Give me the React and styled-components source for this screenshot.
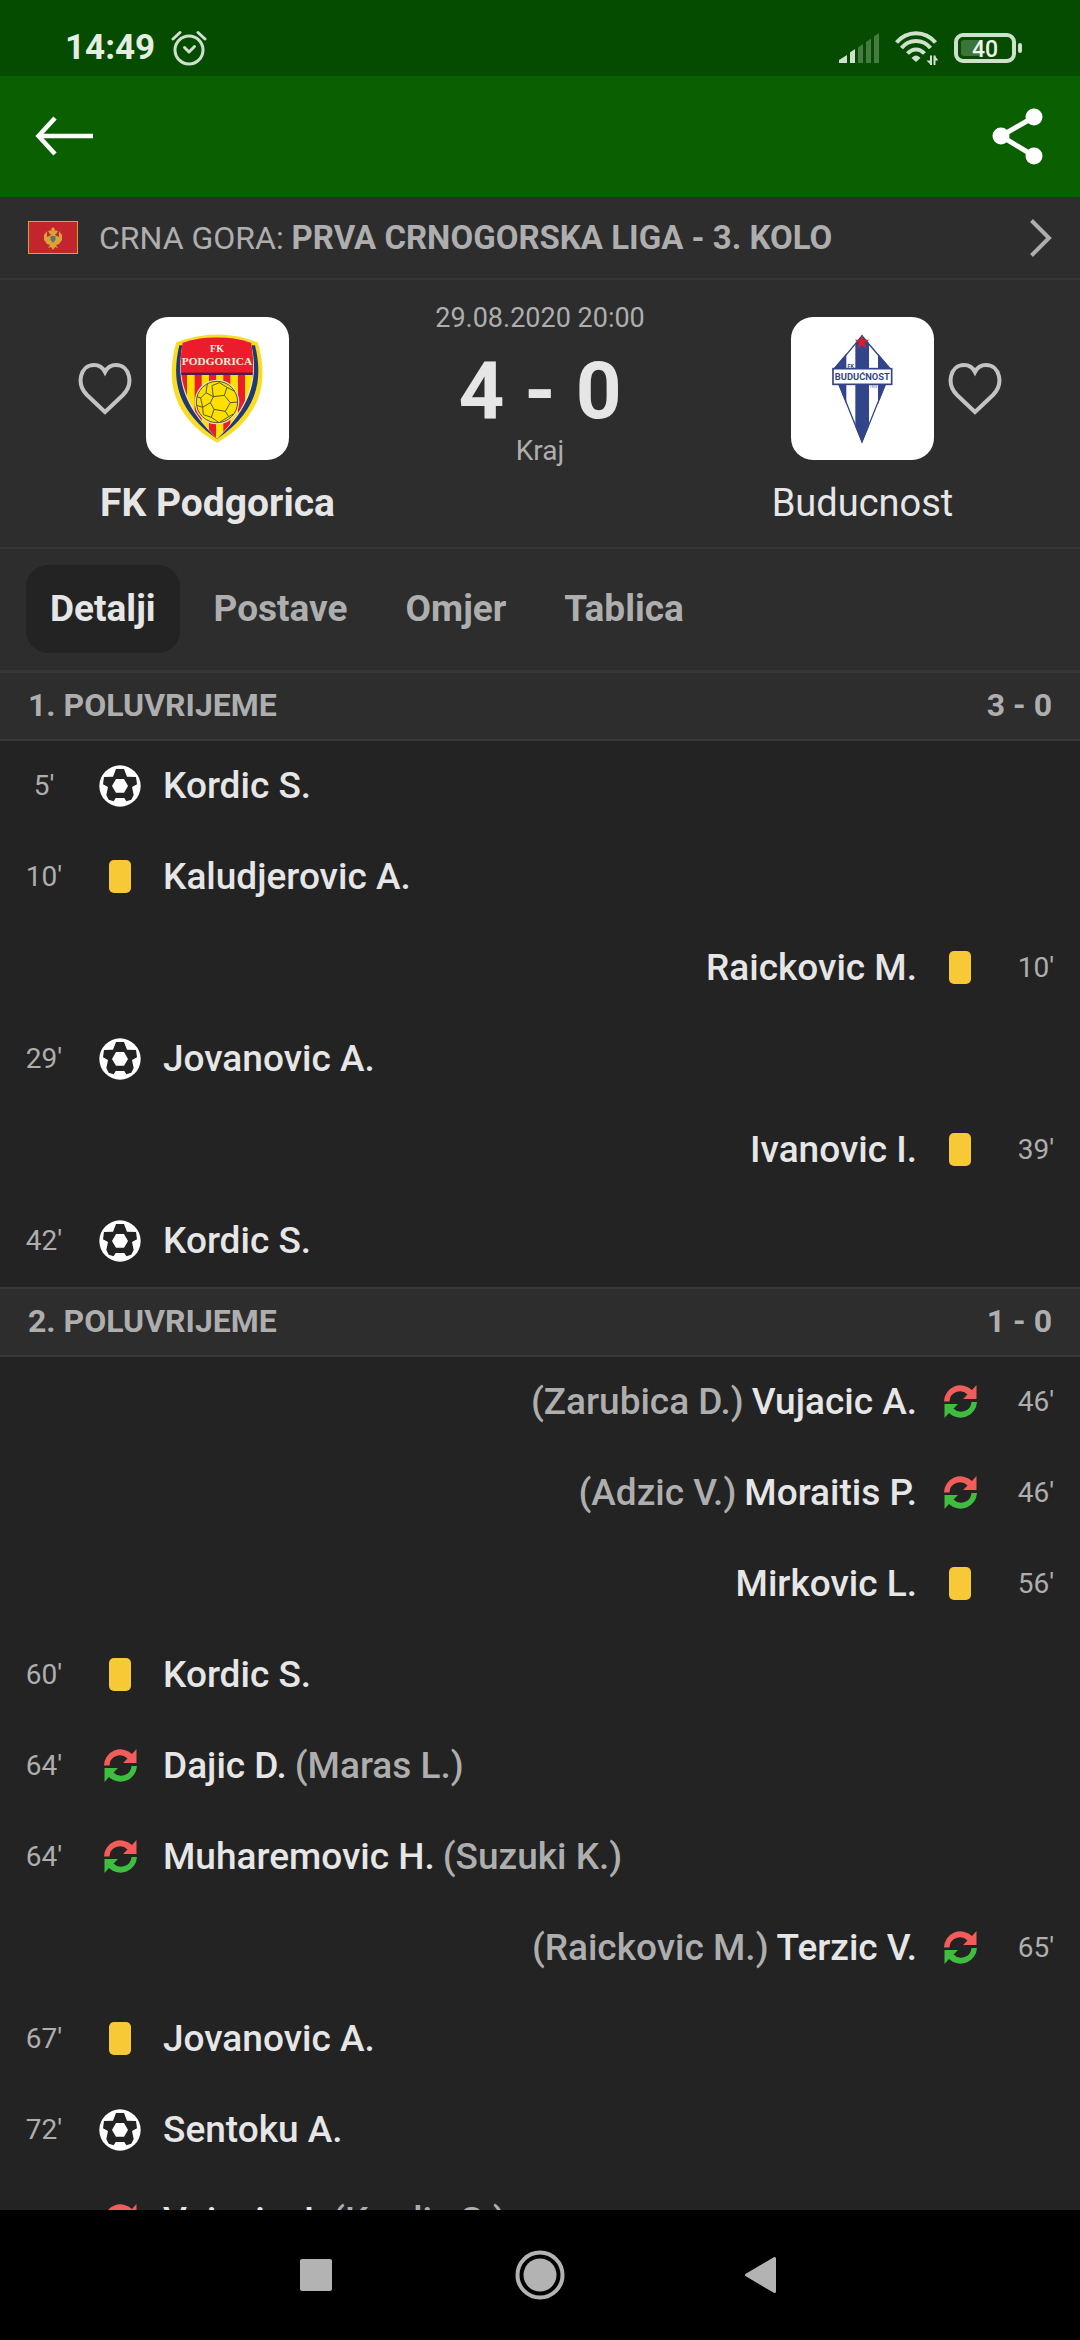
import React from "react";
import styled, { createGlobalStyle, css } from "styled-components";

const colors = {
  status: "#054b00",
  header: "#0a6000",
  panel: "#2d2d2d",
  list: "#232323",
  line: "#373737",
  text: "#e6e6e6",
  muted: "#aeaeae",
  card: "#f8c936",
  off: "#f25c5a",
  on: "#3fbd3f",
};

const GlobalStyle = createGlobalStyle`
  * { box-sizing: border-box; }
  body { margin: 0; background: #000; }
  button { padding: 0; border: 0; background: none; color: inherit; font: inherit; cursor: pointer; }
  svg { display: block; }
`;

const Screen = styled.div`
  display: flex;
  flex-direction: column;
  height: 100vh;
  background: ${colors.list};
  color: ${colors.text};
  font-family: Roboto, "Liberation Sans", sans-serif;
`;

const StatusBar = styled.div`
  flex: none;
  display: flex;
  align-items: center;
  justify-content: space-between;
  height: 76px;
  padding: 20px 58px 0 65px;
  background: ${colors.status};
  color: #e4eee3;
`;

const StatusGroup = styled.div`
  display: flex;
  align-items: center;
  gap: 16px;
`;

const Clock = styled.time`
  font-size: 35px;
  line-height: 40px;
  font-weight: 700;
`;

const Header = styled.header`
  flex: none;
  display: flex;
  align-items: center;
  justify-content: space-between;
  height: 121px;
  padding: 0 30px 0 32px;
  background: ${colors.header};
  color: #fff;
`;

const Content = styled.main`
  flex: 1;
  min-height: 0;
  overflow: hidden;
`;

const LeagueLink = styled.a`
  display: flex;
  align-items: center;
  height: 83px;
  padding: 0 28px;
  border-bottom: 2px solid ${colors.line};
  background: ${colors.panel};
  color: ${colors.muted};
  font-size: 32px;
  line-height: 40px;
  text-decoration: none;
`;

const LeagueName = styled.span`
  flex: 1;
  padding-left: 21px;
`;

const Round = styled.b`
  font-size: 33px;
`;

const Match = styled.section`
  display: grid;
  grid-template-columns: auto 1fr auto;
  padding: 0 78px 20px;
  border-bottom: 2px solid ${colors.line};
  background: ${colors.panel};
`;

const Team = styled.div`
  display: grid;
  grid-template-columns: 68px 143px 68px;
  align-items: center;
  row-gap: 19px;
  padding-top: 37px;
`;

const FavButton = styled.button`
  grid-row: 1;
  grid-column: ${(p) => (p.$away ? 3 : 1)};
  justify-self: ${(p) => (p.$away ? "end" : "start")};
`;

const Crest = styled.div`
  grid-row: 1;
  grid-column: 2;
  height: 143px;
  border-radius: 22px;
  background: #fff;
  overflow: hidden;
`;

const TeamName = styled.h2`
  grid-column: 1 / -1;
  margin: 0;
  font-size: ${(p) => (p.$winner ? 39 : 38)}px;
  line-height: 48px;
  font-weight: ${(p) => (p.$winner ? 700 : 400)};
  text-align: center;
`;

const Result = styled.div`
  display: flex;
  flex-direction: column;
  align-items: center;
  padding-top: 18px;
`;

const Info = styled.div`
  color: ${colors.muted};
  font-size: ${(p) => (p.$date ? 27 : 28)}px;
  line-height: 40px;
`;

const Score = styled.div`
  padding-top: 13px;
  font-size: 80px;
  line-height: 80px;
  font-weight: 700;
`;

const Tabs = styled.nav`
  display: flex;
  gap: 10px;
  padding: 16px 26px 17px;
  border-bottom: 1px solid ${colors.line};
  background: ${colors.panel};
`;

const Tab = styled.button`
  height: 88px;
  padding: 0 24px;
  border-radius: 22px;
  color: ${colors.muted};
  font-size: 37px;
  line-height: 44px;
  font-weight: 700;
  ${(p) => p.$active && css`
    background: ${colors.list};
    color: ${colors.text};
  `}
`;

const PeriodHeader = styled.h3`
  display: flex;
  align-items: center;
  justify-content: space-between;
  height: 70px;
  margin: 0;
  padding: 0 28px 2px;
  border: solid ${colors.line};
  border-width: 2px 0;
  background: ${colors.panel};
  color: ${colors.muted};
  font-size: 32px;
  line-height: 40px;
  font-weight: 700;
`;

const EventList = styled.ul`
  margin: 0;
  padding: 0;
  list-style: none;
`;

const EventRow = styled.li`
  display: flex;
  flex-direction: ${(p) => (p.$away ? "row-reverse" : "row")};
  align-items: center;
  height: 91px;
  padding: 0 8px 2px;
`;

const Minute = styled.span`
  width: 72px;
  color: ${colors.muted};
  font-size: 28px;
  line-height: 36px;
  text-align: center;
`;

const EventIcon = styled.span`
  display: flex;
  justify-content: center;
  width: 80px;
`;

const Players = styled.span`
  display: flex;
  flex-direction: ${(p) => (p.$away ? "row-reverse" : "row")};
  gap: 8px;
  padding: 0 3px;
  font-size: 37px;
  line-height: 44px;
  font-weight: 500;
`;

const Replaced = styled.span`
  color: ${colors.muted};
`;

const YellowCard = styled.span`
  width: 22px;
  height: 33px;
  border-radius: 5px;
  background: ${colors.card};
`;

const SystemNav = styled.nav`
  flex: none;
  display: flex;
  align-items: center;
  justify-content: center;
  gap: 168px;
  height: 130px;
  background: #000;
  color: #b3b3b3;
`;

const AlarmIcon = () => (
  <svg width="36" height="36" viewBox="0 0 36 36" fill="none" stroke="#cfe0cd" strokeWidth="3" strokeLinecap="round">
    <circle cx="18" cy="20" r="14" />
    <path d="M2 9 9 2.5M34 9 27 2.5" />
    <path d="M13.5 17.5 18 22l5.5-5.5" strokeLinejoin="round" />
  </svg>
);

const SignalIcon = () => (
  <svg width="40" height="30" viewBox="0 0 40 30" fill="#cfe0cd">
    <path d="M0 30v-3l8-5v8z" />
    <path d="M11 30V19.5l5-3.5v14z" />
    <g fill="#457a41">
      <path d="M19 30V14.5l5-3.5v19z" />
      <path d="M27 30V9l5-3.5V30z" />
      <path d="M35 30V3.5L40 0v30z" />
    </g>
  </svg>
);

const WifiIcon = () => (
  <svg width="43" height="34" viewBox="0 0 43 34" fill="none" stroke="#cfe0cd" strokeWidth="4">
    <path d="M1.5 11.5C12-1 30-1 40.5 11.5" />
    <path d="M6.5 17C14 7.5 28 7.5 35.5 17" />
    <path d="M12.5 22.5c5-5.5 12-5.5 17 0" />
    <path d="M16.5 27c3-3.5 6-3.5 9 0L21 31z" fill="#cfe0cd" stroke="none" />
    <path d="M36 24.5V34M39.5 24.5V34" strokeWidth="2" />
    <path d="M31.5 29.5H36V34zM39.5 24.5V29.5H43.5z" fill="#cfe0cd" stroke="none" />
  </svg>
);

const BatteryIcon = () => (
  <svg width="68" height="30" viewBox="0 0 68 30">
    <rect x="2" y="2" width="58" height="26" rx="7" fill="none" stroke="#cfe0cd" strokeWidth="4" />
    <rect x="7" y="7" width="20" height="16" rx="3" fill="#3b7438" />
    <rect x="64" y="10" width="4" height="10" rx="2" fill="#cfe0cd" />
    <text x="31" y="24" textAnchor="middle" fill="#eef5ed" fontSize="23" fontWeight="500">40</text>
  </svg>
);

const BackIcon = () => (
  <svg width="64" height="48" viewBox="0 0 64 48" fill="none" stroke="#fff" strokeWidth="4.5">
    <path d="M61 23H6" />
    <path d="M23 5 6.5 23 23 41" />
  </svg>
);

const ShareIcon = () => (
  <svg width="60" height="60" viewBox="0 0 60 60" fill="#fff">
    <path d="M44 10 11 29l33 20" fill="none" stroke="#fff" strokeWidth="5" />
    <circle cx="44" cy="10" r="8.5" />
    <circle cx="11" cy="29" r="8.5" />
    <circle cx="44" cy="49" r="8.5" />
  </svg>
);

const ChevronIcon = () => (
  <svg width="23" height="38" viewBox="0 0 23 38" fill="none" stroke={colors.muted} strokeWidth="4">
    <path d="M2.5 1.5 20 19 2.5 36.5" />
  </svg>
);

const HeartIcon = () => (
  <svg width="54" height="52" viewBox="0 0 54 52" fill="none" stroke="#c3c3c3" strokeWidth="4">
    <path d="M27 49 9 32C-2 21 2 2 16 2c5 0 9 3 11 7 2-4 6-7 11-7 14 0 18 19 7 30z" />
  </svg>
);

const FlagIcon = () => (
  <svg width="50" height="33" viewBox="0 0 50 33">
    <rect width="50" height="33" fill="#d0a53c" />
    <rect x="1" y="1" width="48" height="31" fill="#c4252c" />
    <g fill="#dba23c">
      <path d="M25 6l2 2-1 2 3 1-2 3 4 2 0-6 3 4 0 5-3 4-3 1 2 3-3-1-2 3-2-3-3 1 2-3-3-1-3-4 0-5 3-4 0 6 4-2-2-3 3-1-1-2z" />
      <path d="M20 10l4-1-2 4zM30 10l-4-1 2 4z" />
    </g>
    <path d="M22.5 15h5v4l-2.5 3-2.5-3z" fill="#5c7a62" />
  </svg>
);

const PodgoricaCrest = () => (
  <svg width="143" height="143" viewBox="-12 -9 429 429">
    <defs>
      <clipPath id="podgorica-field">
        <path d="M98 68Q201 36 303 68C318 150 316 240 201 356 87 240 84 150 98 68z" />
      </clipPath>
    </defs>
    <path d="M79 67Q201 20 323 67C352 160 350 285 201 368 53 285 51 160 79 67z" fill="#fbdc25" />
    <path d="M88 76 315 76C338 170 330 268 201 357 73 268 66 170 88 76z" fill="#1f3b70" />
    <path d="M100 66Q201 36 302 66C325 160 315 250 201 356 88 250 78 160 100 66z" fill="#ece3d4" />
    <g clipPath="url(#podgorica-field)">
      <rect x="80" y="40" width="245" height="330" fill="#ffe000" />
      {[92, 136, 179, 222, 266, 309].map((x) => (
        <rect key={x} x={x - 2} y="160" width="21" height="210" fill="#ec1c2c" />
      ))}
      <rect x="80" y="40" width="245" height="122" fill="#ec1c2c" />
      <rect x="80" y="158" width="245" height="7" fill="#4d1c4c" />
    </g>
    <circle cx="201" cy="246" r="67" fill="#e5dec0" />
    <circle cx="201" cy="246" r="62" fill="#fde000" stroke="#57592b" strokeWidth="3" />
    <g fill="none" stroke="#57592b" strokeWidth="3">
      <path d="M190 230 223 226 241 248 226 274 192 268 181 248z" />
      <path d="M190 230 168 218 152 234 158 262 181 248M168 218 172 191M223 226 231 202 208 188 186 197 190 230M231 202 254 214M241 248 262 246M226 274 236 290 210 306M192 268 184 292 160 284 158 262 140 256M184 292 206 307M152 234 141 230M236 290 250 282" />
    </g>
    <text x="201" y="97" textAnchor="middle" fill="#fff3dc" fontFamily="Liberation Serif, serif" fontSize="30" fontWeight="700">FK</text>
    <text x="201" y="135" textAnchor="middle" fill="#fff3dc" fontFamily="Liberation Serif, serif" fontSize="34" fontWeight="700">PODGORICA</text>
  </svg>
);

const BuducnostCrest = () => (
  <svg width="143" height="143" viewBox="-30 -9 429 429">
    <defs>
      <clipPath id="buducnost-field">
        <path d="M183 45 273 150 183 368 94 150z" />
      </clipPath>
    </defs>
    <g clipPath="url(#buducnost-field)">
      <rect x="90" y="40" width="190" height="330" fill="#fff" />
      <rect x="90" y="40" width="46" height="330" fill="#33458a" />
      <rect x="163" y="40" width="41" height="330" fill="#33458a" />
      <rect x="231" y="40" width="46" height="330" fill="#33458a" />
    </g>
    <path d="M183 48 270 150 183 366 97 150z" fill="none" stroke="#33458a" strokeWidth="4" />
    <text x="149" y="143" textAnchor="middle" fill="#33458a" fontSize="16" fontWeight="700">FK</text>
    <rect x="96" y="146" width="176" height="47" fill="#fff" stroke="#33458a" strokeWidth="5" />
    <text x="184" y="180" textAnchor="middle" fill="#33458a" fontSize="28" fontWeight="700">BUDUĆNOST</text>
    <text x="217" y="203" textAnchor="middle" fill="#33458a" fontSize="10">1925</text>
    <path d="M183 42l5 17h17l-14 10 6 17-14-10-14 10 6-17-14-10h17z" fill="#d41f2c" />
  </svg>
);

const BallIcon = () => (
  <svg width="42" height="42" viewBox="27 60 126 126">
    <circle cx="90" cy="123" r="62" fill="#fff" />
    <path d="M78 72h24l9 23 27 1 3 22-15 8 5 24-7 14-15 5-6-10H77l-6 10-15-5-7-14 5-24-15-8 3-22 27-1z" fill={colors.list} />
    <path d="M78 102h24l12 21-12 20H78l-12-20z" fill="#fff" />
  </svg>
);

const SubstitutionIcon = () => (
  <svg width="33" height="33" viewBox="0 0 33 33">
    <path d="M0 16.5A16.5 16.5 0 0 1 28 5L32.5 0V14H19l4.5-4.5A10.5 10.5 0 0 0 5.5 16.5z" fill={colors.off} />
    <path d="M33 17A16.5 16.5 0 0 1 5 28L.5 33V19H14l-4.5 4.5A10.5 10.5 0 0 0 27.5 17z" fill={colors.on} />
  </svg>
);

const icons = {
  goal: <BallIcon />,
  card: <YellowCard role="img" aria-label="Žuti karton" />,
  sub: <SubstitutionIcon />,
};

const periods = [
  {
    name: "1. POLUVRIJEME",
    score: "3 - 0",
    events: [
      { minute: "5'", type: "goal", player: "Kordic S." },
      { minute: "10'", type: "card", player: "Kaludjerovic A." },
      { minute: "10'", type: "card", player: "Raickovic M.", away: true },
      { minute: "29'", type: "goal", player: "Jovanovic A." },
      { minute: "39'", type: "card", player: "Ivanovic I.", away: true },
      { minute: "42'", type: "goal", player: "Kordic S." },
    ],
  },
  {
    name: "2. POLUVRIJEME",
    score: "1 - 0",
    events: [
      { minute: "46'", type: "sub", player: "Vujacic A.", replaced: "(Zarubica D.)", away: true },
      { minute: "46'", type: "sub", player: "Moraitis P.", replaced: "(Adzic V.)", away: true },
      { minute: "56'", type: "card", player: "Mirkovic L.", away: true },
      { minute: "60'", type: "card", player: "Kordic S." },
      { minute: "64'", type: "sub", player: "Dajic D.", replaced: "(Maras L.)" },
      { minute: "64'", type: "sub", player: "Muharemovic H.", replaced: "(Suzuki K.)" },
      { minute: "65'", type: "sub", player: "Terzic V.", replaced: "(Raickovic M.)", away: true },
      { minute: "67'", type: "card", player: "Jovanovic A." },
      { minute: "72'", type: "goal", player: "Sentoku A." },
      { minute: "", type: "sub", player: "Vujovic J.", replaced: "(Kordic S.)" },
    ],
  },
];

const tabs = ["Detalji", "Postave", "Omjer", "Tablica"];

function Event({ minute, type, player, replaced, away }) {
  return (
    <EventRow $away={away}>
      <Minute>{minute}</Minute>
      <EventIcon>{icons[type]}</EventIcon>
      <Players $away={away}>
        <span>{player}</span>
        {replaced && <Replaced>{replaced}</Replaced>}
      </Players>
    </EventRow>
  );
}

export default function App() {
  const [active, setActive] = React.useState(tabs[0]);
  return (
    <Screen>
      <GlobalStyle />
      <StatusBar>
        <StatusGroup>
          <Clock>14:49</Clock>
          <AlarmIcon />
        </StatusGroup>
        <StatusGroup>
          <SignalIcon />
          <WifiIcon />
          <BatteryIcon />
        </StatusGroup>
      </StatusBar>
      <Header>
        <button type="button" aria-label="Natrag"><BackIcon /></button>
        <button type="button" aria-label="Podijeli"><ShareIcon /></button>
      </Header>
      <Content>
        <LeagueLink href="#liga">
          <FlagIcon />
          <LeagueName>CRNA GORA: <Round>PRVA CRNOGORSKA LIGA - 3. KOLO</Round></LeagueName>
          <ChevronIcon />
        </LeagueLink>
        <Match>
          <Team>
            <FavButton type="button" aria-label="Prati FK Podgorica"><HeartIcon /></FavButton>
            <Crest><PodgoricaCrest /></Crest>
            <TeamName $winner>FK Podgorica</TeamName>
          </Team>
          <Result>
            <Info $date>29.08.2020 20:00</Info>
            <Score>4 - 0</Score>
            <Info>Kraj</Info>
          </Result>
          <Team>
            <FavButton type="button" $away aria-label="Prati Buducnost"><HeartIcon /></FavButton>
            <Crest><BuducnostCrest /></Crest>
            <TeamName>Buducnost</TeamName>
          </Team>
        </Match>
        <Tabs>
          {tabs.map((tab) => (
            <Tab key={tab} type="button" $active={tab === active} onClick={() => setActive(tab)}>{tab}</Tab>
          ))}
        </Tabs>
        {periods.map((period) => (
          <section key={period.name}>
            <PeriodHeader>
              <span>{period.name}</span>
              <span>{period.score}</span>
            </PeriodHeader>
            <EventList>
              {period.events.map((event, i) => <Event key={i} {...event} />)}
            </EventList>
          </section>
        ))}
      </Content>
      <SystemNav>
        <button type="button" aria-label="Nedavne aplikacije">
          <svg width="56" height="56" viewBox="0 0 56 56" fill="currentColor"><rect x="12" y="12" width="32" height="32" rx="2" /></svg>
        </button>
        <button type="button" aria-label="Početni zaslon">
          <svg width="56" height="56" viewBox="0 0 56 56" fill="currentColor">
            <circle cx="28" cy="28" r="22.5" fill="none" stroke="currentColor" strokeWidth="4" />
            <circle cx="28" cy="28" r="16.5" />
          </svg>
        </button>
        <button type="button" aria-label="Natrag">
          <svg width="56" height="56" viewBox="0 0 56 56" fill="currentColor" stroke="currentColor" strokeWidth="3" strokeLinejoin="round"><path d="M38.5 11.5v33L10.5 28z" /></svg>
        </button>
      </SystemNav>
    </Screen>
  );
}
